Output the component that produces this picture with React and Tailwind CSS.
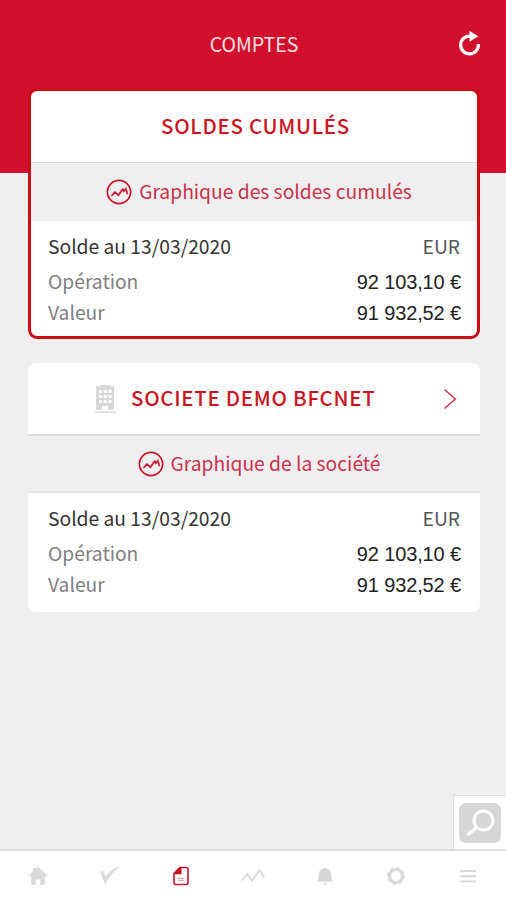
/* eslint-disable react/prop-types */

function TrendIcon() {
  return (
    <svg width="26" height="26" viewBox="0 0 26 26" fill="none" stroke="#cc1428" className="shrink-0">
      <circle cx="13" cy="13" r="11.6" strokeWidth="1.7" />
      <path d="M5.500 16.800l3.400-3.600 3.500 3 4.200-6 1.300 1.900 1.900-2.300 1.700 5.400" strokeWidth="1.7" />
    </svg>
  );
}

function ReloadIcon() {
  return (
    <svg width="24" height="28" viewBox="0 0 24 28" fill="none">
      <path d="M20.4 14.2a8.900 8.900 0 1 1-7.600-8" stroke="#fff" strokeWidth="3.2" />
      <path d="M11.400.8l8.800 5.400-8.600 5.600z" fill="#fff" />
    </svg>
  );
}

function BuildingIcon() {
  return (
    <svg width="22" height="30" viewBox="0 0 22 30" fill="#d8d8d8">
      <path fillRule="evenodd" d="M6 2.200V1h10v1.200h4V26h-6v-4h-6v4H2V2.200zM5 6v3h3V6zM9.800 6v3h3V6zM14.600 6v3h3V6zM5 11v3h3v-3zM9.800 11v3h3v-3zM14.600 11v3h3v-3zM5 16v3h3v-3zM9.800 16v3h3v-3zM14.600 16v3h3v-3z" />
      <path d="M.5 27.600h21V29H.5z" />
    </svg>
  );
}

function Balance() {
  return (
    <div>
      <div className="flex justify-between h-[37px] leading-[36px]">
        <span className="text-[#333]">Solde au 13/03/2020</span>
        <span className="mr-px text-[#555]">EUR</span>
      </div>
      <div className="flex justify-between h-[31px] leading-[32px]">
        <span className="text-[#808080]">Opération</span>
        <span className="pt-px font-['Liberation_Sans',sans-serif] text-[20px] tracking-[-0.13px] text-[#222]">92 103,10 €</span>
      </div>
      <div className="flex justify-between h-[31px] leading-[32px]">
        <span className="text-[#808080]">Valeur</span>
        <span className="pt-px font-['Liberation_Sans',sans-serif] text-[20px] tracking-[-0.13px] text-[#222]">91 932,52 €</span>
      </div>
    </div>
  );
}

const tabs = [
  {
    id: "home",
    icon: <path d="M12 2.500l10 9.700h-3.200V21h-4.500v-5.500H9.700V21H5.200v-8.800H2L7 7.300V4h2.500v1z" fill="#dadada" />,
  },
  {
    id: "validate",
    icon: <path d="M2 7.500l3-1 2.700 6.500C11.500 7 16 3.500 21.800 2.500 15.500 7.500 10.500 13 7.500 21z" fill="#dadada" />,
  },
  {
    id: "accounts",
    icon: (
      <>
        <path d="M11 3.500h6a2 2 0 0 1 2 2v13a2 2 0 0 1-2 2H7a2 2 0 0 1-2-2v-9z" fill="#fff" stroke="#cb2038" strokeWidth="1.700" />
        <path d="M4.800 10.200l6-7h1.700v7z" fill="#cc0a1e" />
        <path d="M8.500 14.300h7M9.500 16.300h5" stroke="#e79aa5" strokeWidth="1.300" />
      </>
    ),
  },
  {
    id: "chart",
    icon: <path d="M0.700 16.500l5.600-6.700 4.700 7.200 7.700-11 4.600 7.500" fill="none" stroke="#d8d8d8" strokeWidth="1.800" />,
  },
  {
    id: "alerts",
    icon: <path d="M10.900 4.200a1.200 1.200 0 0 1 2.200 0c3.700.9 5 3.300 5 6.800 0 3 .6 4.600 2.200 6.600H3.700c1.600-2 2.200-3.600 2.200-6.600 0-3.500 1.300-5.900 5-6.800zM10 18.800h4l-2 2.600z" fill="#d6d6d6" />,
  },
  {
    id: "settings",
    icon: (
      <>
        <circle cx="12" cy="12" r="8.300" fill="none" stroke="#d8d8d8" strokeWidth="1.400" strokeDasharray="3.260 3.260" />
        <circle cx="12" cy="12" r="6.500" fill="none" stroke="#d8d8d8" strokeWidth="3.200" />
      </>
    ),
  },
  {
    id: "menu",
    icon: <path d="M4.300 7h15.700M4.300 12.200h15.700M4.300 17.400h15.700" fill="none" stroke="#d6d6d6" strokeWidth="1.900" />,
  },
];

export default function App() {
  return (
    <div className="flex flex-col w-[506px] h-[900px] overflow-hidden bg-[#efefef] font-['Noto_Sans_CJK_SC',sans-serif] text-[19.25px] whitespace-nowrap">
      <header className="flex items-center h-[88px] shrink-0 bg-[#d0102c] pl-[50px] pr-[24px]">
        <h1 className="flex-1 text-center text-[19.500px] leading-[28px] text-[#fbe0e3]">COMPTES</h1>
        <ReloadIcon />
      </header>

      <main className="flex-1 bg-linear-to-b from-[#d0102c] from-[85px] to-[#efefef] to-[85px] pl-[28px] pr-[26px]">
        <section className="h-[251px] rounded-[9px] border-3 border-[#cc0c14] bg-white overflow-hidden">
          <div className="flex items-center justify-center h-[72px] border-b border-[#dcdcdc] pb-[3px] pl-[3px]">
            <h2 className="text-[20.5px] font-medium leading-[30px] tracking-[0.7px] text-[#cb141e]">SOLDES CUMULÉS</h2>
          </div>
          <div className="flex items-center justify-center gap-[7px] h-[58px] bg-[#f0eef0] pl-[10px]">
            <TrendIcon />
            <span className="pb-[2px] text-[#c8324a]">Graphique des soldes cumulés</span>
          </div>
          <div className="pl-[17px] pr-[16px] pt-[7px]">
            <Balance />
          </div>
        </section>

        <section className="mt-[24px] h-[249px] rounded-[8px] bg-white overflow-hidden">
          <div className="flex items-center h-[73px] border-b-2 border-[#dedcde] pl-[66px] pr-[23px]">
            <BuildingIcon />
            <h2 className="flex-1 pl-[15px] pb-[3px] text-[20.5px] font-medium leading-[30px] tracking-[0.7px] text-[#cb141e]">SOCIETE DEMO BFCNET</h2>
            <svg width="14" height="22" viewBox="0 0 14 22" fill="none" stroke="#cb3a50" strokeWidth="1.600">
              <path d="M1.500 1.500L12.300 11 1.500 20.500" />
            </svg>
          </div>
          <div className="flex items-center justify-center gap-[7px] h-[57px] border-b-2 border-[#e9e7e9] bg-[#f0eef0] pl-[10px]">
            <TrendIcon />
            <span className="text-[#c8324a]">Graphique de la société</span>
          </div>
          <div className="pl-[20px] pr-[19px] pt-[7px]">
            <Balance />
          </div>
        </section>
      </main>

      <div className="flex justify-end h-[54px] shrink-0">
        <button className="flex items-center justify-center w-[53px] h-[54px] border-t border-l border-[#dedede] bg-white">
          <svg width="42" height="40" viewBox="0 0 42 40" fill="none" stroke="#fff">
            <rect width="42" height="40" rx="7" fill="#d6d6d5" stroke="none" />
            <circle cx="24.500" cy="17.500" r="9.500" strokeWidth="2.800" />
            <path d="M17.500 24.500L8.500 32" strokeWidth="3.200" />
          </svg>
        </button>
      </div>

      <nav className="flex items-center h-[51px] shrink-0 border-t-2 border-[#dddddd] bg-white px-[2px]">
        {tabs.map((tab) => (
          <button key={tab.id} className="flex flex-1 justify-center">
            <svg width="24" height="24" viewBox="0 0 24 24">{tab.icon}</svg>
          </button>
        ))}
      </nav>
    </div>
  );
}
